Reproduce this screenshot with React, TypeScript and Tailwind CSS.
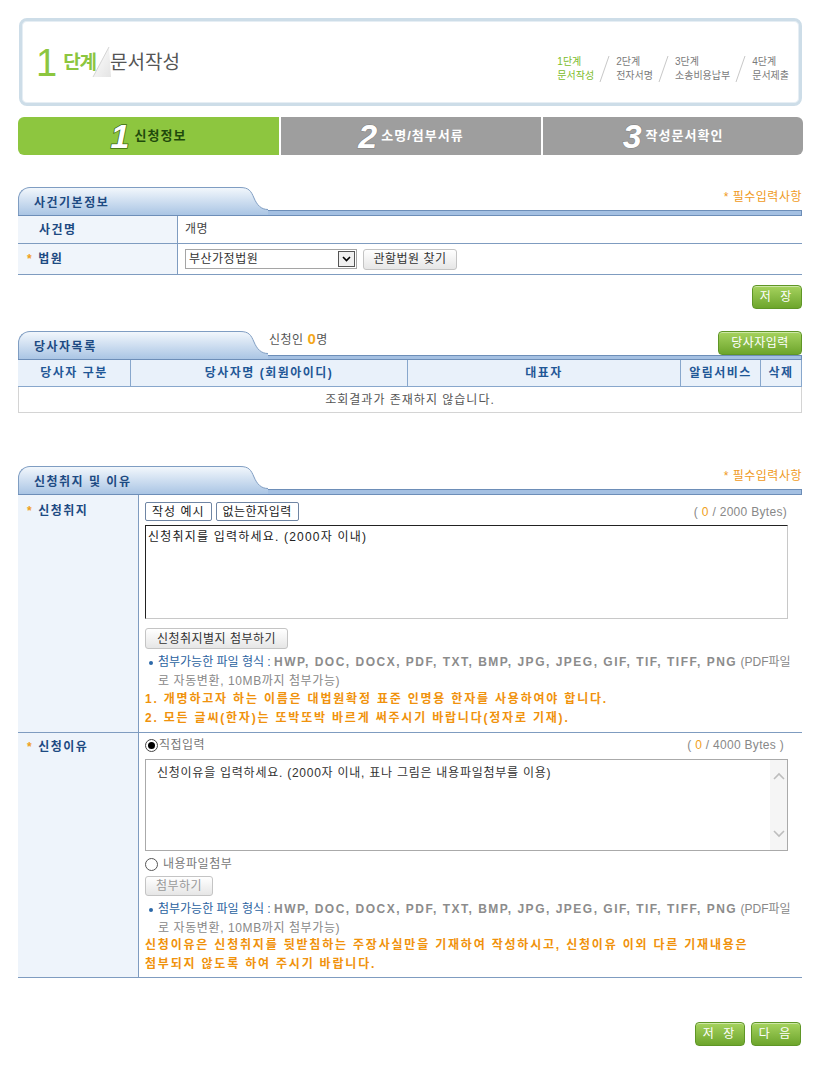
import React from 'react';

function SectionHead({ id, title, children }: { id: string; title: string; children?: React.ReactNode }) {
  return (
    <div className="flex h-[29px] items-stretch border-b border-[#6d8eb8]">
      <div className="w-[222px] shrink-0 rounded-tl-[12px] border-l border-t border-[#7f9dc2] bg-gradient-to-b from-[#f2f7fc] to-[#aac5e4] pl-[15px] pt-[6px] text-[12px] font-bold tracking-[1.5px] text-[#1d4a82]">
        {title}
      </div>
      <svg width="28" height="28" viewBox="0 0 28 28" className="shrink-0">
        <defs>
          <linearGradient id={id} x1="0" y1="0" x2="0" y2="1">
            <stop offset="0" stopColor="#f2f7fc" />
            <stop offset="1" stopColor="#aac5e4" />
          </linearGradient>
        </defs>
        <path d="M0,0.5 C9,0.5 11,4 14,11 C17,18 21,22.5 28,22.5 L28,28 L0,28 Z" fill={`url(#${id})`} />
        <path d="M0,0.5 C9,0.5 11,4 14,11 C17,18 21,22.5 28,22.5" fill="none" stroke="#7f9dc2" />
      </svg>
      <div className="flex flex-1 flex-col">
        <div className="flex flex-1 items-center">{children}</div>
        <div className="h-[5px] border-r border-t border-[#6d8eb8] bg-[#a4c0e2]" />
      </div>
    </div>
  );
}

function GreenBtn({ children, className }: { children: React.ReactNode; className: string }) {
  return (
    <button className={`h-[24px] rounded-[4px] border border-[#5f9626] bg-gradient-to-b from-[#a6d35e] to-[#6da52b] text-[12px] text-white shadow-[inset_0_1px_0_rgba(255,255,255,0.45)] ${className}`}>
      {children}
    </button>
  );
}

function GrayBtn({ children, className }: { children: React.ReactNode; className: string }) {
  return (
    <button className={`rounded-[3px] border border-[#c4c4c4] bg-gradient-to-b from-[#ffffff] to-[#e6e6e6] text-[12px] tracking-[0.5px] ${className}`}>
      {children}
    </button>
  );
}

function Star() {
  return <span className="mr-[5px] text-[12px] font-bold text-[#f0a020]">*</span>;
}

function FileInfo() {
  return (
    <div className="mt-[4px] pl-[13px] text-[12px] leading-[19px] text-[#777]">
      <div className="relative whitespace-nowrap">
        <span className="absolute left-[-9px] top-[8px] h-[4px] w-[4px] rounded-full bg-[#2c68a8]" />
        <span className="text-[#2a62a0]">첨부가능한 파일 형식 : </span>
        <span className="font-bold tracking-[1.5px] text-[#8c8c8c]">HWP, DOC, DOCX, PDF, TXT, BMP, JPG, JPEG, GIF, TIF, TIFF, PNG</span>
        <span className="text-[#888]"> (PDF파일</span>
      </div>
      <div className="tracking-[0.6px] text-[#888]">로 자동변환, 10MB까지 첨부가능)</div>
    </div>
  );
}

function Steps() {
  const items = [
    ['1단계', '문서작성'],
    ['2단계', '전자서명'],
    ['3단계', '소송비용납부'],
    ['4단계', '문서제출'],
  ];
  return (
    <div className="flex items-end">
      {items.map(([a, b], i) => (
        <div key={a} className="flex items-end">
          {i > 0 && (
            <svg width="22" height="28" viewBox="0 0 22 28">
              <line x1="15" y1="1" x2="6" y2="27" stroke="#c8c8c8" strokeWidth="1" />
            </svg>
          )}
          <div className={`text-[10px] leading-[14px] ${i === 0 ? 'text-[#7cbc2b]' : 'text-[#7a7a7a]'}`}>
            <div>{a}</div>
            <div>{b}</div>
          </div>
        </div>
      ))}
    </div>
  );
}

export default function App() {
  return (
    <div className="min-h-[1066px] w-[816px] bg-white pb-[20px] font-['Liberation_Sans','Noto_Sans_CJK_KR',sans-serif] text-[12px] text-[#333]">
      <div className="ml-[18px] w-[785px] pt-[18px]">
        {/* stage header */}
        <div className="mx-[1px] flex h-[88px] items-center justify-between rounded-[8px] border-[3px] border-[#cddde8] bg-white pl-[14px] pr-[10px] shadow-[inset_0_0_0_1px_#e6eef4]">
          <div className="flex items-center pt-[2px]">
            <span className="text-[38px] leading-none text-[#8cc63f]">1</span>
            <span className="relative ml-[6px] text-[19px] font-bold tracking-[-1px] text-[#8cc63f]">
              단계
              <svg width="34" height="34" viewBox="0 0 34 34" className="absolute left-[24px] top-[-6px]">
                <defs>
                  <linearGradient id="sl" x1="0" y1="0" x2="1" y2="1">
                    <stop offset="0" stopColor="#ffffff" />
                    <stop offset="1" stopColor="#e4e4e4" />
                  </linearGradient>
                </defs>
                <polygon points="22,4 6,34 24,34" fill="url(#sl)" />
                <line x1="22" y1="4" x2="6" y2="34" stroke="#d4d4d4" />
              </svg>
            </span>
            <span className="ml-[14px] text-[19px] text-[#555]">문서작성</span>
          </div>
          <div className="pt-[14px]">
            <Steps />
          </div>
        </div>

        {/* tabs */}
        <div className="mt-[11px] flex h-[38px] gap-[2px]">
          <div className="flex w-[261px] items-center justify-center rounded-l-[6px] bg-[#8dc63f]">
            <span className="mr-[5px] text-[34px] font-bold italic leading-none text-white [-webkit-text-stroke:1.5px_#3e6c12] [paint-order:stroke_fill]">1</span>
            <span className="text-[13px] font-bold tracking-[1px] text-[#1f4a0c]">신청정보</span>
          </div>
          <div className="flex w-[260px] items-center justify-center bg-[#9e9e9e]">
            <span className="mr-[4px] text-[34px] font-bold italic leading-none text-white [-webkit-text-stroke:1px_#808080] [paint-order:stroke_fill]">2</span>
            <span className="text-[13px] font-bold tracking-[1px] text-white">소명/첨부서류</span>
          </div>
          <div className="flex flex-1 items-center justify-center rounded-r-[6px] bg-[#9e9e9e]">
            <span className="mr-[4px] text-[34px] font-bold italic leading-none text-white [-webkit-text-stroke:1px_#808080] [paint-order:stroke_fill]">3</span>
            <span className="text-[13px] font-bold tracking-[1px] text-white">작성문서확인</span>
          </div>
        </div>

        {/* section 1 */}
        <div className="mt-[32px] w-[784px]">
          <SectionHead id="gA" title="사건기본정보">
            <span className="ml-auto mb-[3px] text-[12px] tracking-[0.5px] text-[#ef9a22]">* 필수입력사항</span>
          </SectionHead>
          <div className="flex h-[28px] border-b border-[#7f9cc0]">
            <div className="flex w-[160px] shrink-0 items-center border-r border-[#7f9cc0] bg-[#f0f5fb] pl-[21px] text-[12px] font-bold tracking-[1.5px] text-[#1d4a82]">사건명</div>
            <div className="flex flex-1 items-start pl-[7px] pt-[4px] text-[12px] tracking-[0.5px] text-[#444]">개명</div>
          </div>
          <div className="flex h-[31px] border-b border-[#7f9cc0]">
            <div className="flex w-[160px] shrink-0 items-center border-r border-[#7f9cc0] bg-[#f0f5fb] pl-[9px] text-[12px] font-bold tracking-[1.5px] text-[#1d4a82]">
              <Star />법원
            </div>
            <div className="flex flex-1 items-center gap-[6px] pl-[7px]">
              <div className="flex h-[20px] w-[172px] items-center border border-[#a5a5a5] bg-white">
                <span className="flex-1 pl-[3px] text-[12px] leading-none tracking-[0.5px] text-[#333]">부산가정법원</span>
                <span className="mr-[1px] flex h-[16px] w-[17px] items-center justify-center border border-[#555] bg-[#f0f0f0]">
                  <svg width="9" height="6" viewBox="0 0 9 6">
                    <path d="M1,1 L4.5,4.5 L8,1" fill="none" stroke="#000" strokeWidth="1.6" />
                  </svg>
                </span>
              </div>
              <GrayBtn className="h-[21px] w-[94px] text-[#333]">관할법원 찾기</GrayBtn>
            </div>
          </div>
          <div className="mt-[10px] flex justify-end">
            <GreenBtn className="w-[50px] tracking-[3px]">저 장</GreenBtn>
          </div>
        </div>

        {/* section 2 */}
        <div className="mt-[22px] w-[784px]">
          <SectionHead id="gB" title="당사자목록">
            <div className="flex w-full items-start self-stretch">
              <span className="ml-[1px] mt-[-3px] text-[12px] tracking-[0.5px] text-[#555]">
                신청인 <span className="text-[15px] font-bold text-[#f4a81a]">0</span>명
              </span>
              <GreenBtn className="ml-auto mt-[0px] h-[21px] w-[84px] tracking-[0.5px]">당사자입력</GreenBtn>
            </div>
          </SectionHead>
          <div className="flex h-[27px] border-b border-[#88a7cc] bg-[#e9f1fa] text-[12px] font-bold tracking-[1.5px] text-[#1f5796]">
            <div className="flex w-[113px] items-center justify-center border-r border-[#88a7cc]">당사자 구분</div>
            <div className="flex w-[277px] items-center justify-center border-r border-[#88a7cc]">당사자명 (회원아이디)</div>
            <div className="flex w-[273px] items-center justify-center border-r border-[#88a7cc]">대표자</div>
            <div className="flex w-[80px] items-center justify-center border-r border-[#88a7cc]">알림서비스</div>
            <div className="flex flex-1 items-center justify-center border-r border-[#88a7cc]">삭제</div>
          </div>
          <div className="flex h-[26px] items-center justify-center border-x border-b border-[#d4d4d4] text-[12px] tracking-[1px] text-[#555]">
            조회결과가 존재하지 않습니다.
          </div>
        </div>

        {/* section 3 */}
        <div className="mt-[53px] w-[784px]">
          <SectionHead id="gC" title="신청취지 및 이유">
            <span className="ml-auto mb-[3px] text-[12px] tracking-[0.5px] text-[#ef9a22]">* 필수입력사항</span>
          </SectionHead>

          <div className="flex border-b border-[#7f9cc0]">
            <div className="w-[121px] shrink-0 border-r border-[#7f9cc0] bg-[#eef4fb] pl-[9px] pt-[7px] text-[12px] font-bold tracking-[1.5px] text-[#1d4a82]">
              <Star />신청취지
            </div>
            <div className="min-w-0 flex-1 pb-[4px] pl-[6px] pr-[15px] pt-[7px]">
              <div className="flex items-center">
                <button className="h-[19px] rounded-[2px] border border-[#6f85a3] bg-white px-[6px] text-[12px] tracking-[1px] text-[#222]">작성 예시</button>
                <button className="ml-[4px] h-[19px] rounded-[2px] border border-[#6f85a3] bg-white px-[6px] text-[12px] tracking-[0.5px] text-[#222]">없는한자입력</button>
                <span className="ml-auto text-[12px] tracking-[0.3px] text-[#888]">
                  ( <span className="text-[#f0a020]">0</span> / 2000 Bytes)
                </span>
              </div>
              <div className="mt-[4px] h-[94px] w-[643px] border border-[#c8c8c8] border-l-[#222] border-t-[#222] px-[2px] pt-[2px] text-[12px] tracking-[1.2px] text-[#222]">
                신청취지를 입력하세요. (2000자 이내)
              </div>
              <GrayBtn className="mt-[9px] h-[21px] w-[143px] text-[#333]">신청취지별지 첨부하기</GrayBtn>
              <FileInfo />
              <div className="mt-[-1px] whitespace-nowrap text-[12px] font-bold leading-[19px] tracking-[1.8px] text-[#f0920c]">
                <div>1. 개명하고자 하는 이름은 대법원확정 표준 인명용 한자를 사용하여야 합니다.</div>
                <div>2. 모든 글씨(한자)는 또박또박 바르게 써주시기 바랍니다(정자로 기재).</div>
              </div>
            </div>
          </div>

          <div className="flex border-b border-[#7f9cc0]">
            <div className="w-[121px] shrink-0 border-r border-[#7f9cc0] bg-[#eef4fb] pl-[9px] pt-[5px] text-[12px] font-bold tracking-[1.5px] text-[#1d4a82]">
              <Star />신청이유
            </div>
            <div className="min-w-0 flex-1 pb-[3px] pl-[6px] pr-[15px] pt-[3px]">
              <div className="flex items-center">
                <span className="flex h-[13px] w-[13px] items-center justify-center rounded-full border border-[#444] bg-white">
                  <span className="h-[7px] w-[7px] rounded-full bg-black" />
                </span>
                <span className="ml-[1px] text-[12px] tracking-[0.5px] text-[#777]">직접입력</span>
                <span className="ml-auto pr-[3px] text-[12px] tracking-[0.3px] text-[#888]">
                  ( <span className="text-[#f0a020]">0</span> / 4000 Bytes )
                </span>
              </div>
              <div className="mt-[5px] flex h-[92px] w-[643px] border border-[#aaa]">
                <div className="flex-1 pl-[11px] pt-[4px] text-[12px] tracking-[0.75px] text-[#333]">
                  신청이유을 입력하세요. (2000자 이내, 표나 그림은 내용파일첨부를 이용)
                </div>
                <div className="flex w-[17px] flex-col items-center justify-between bg-[#f5f5f5] py-[12px]">
                  <svg width="12" height="8" viewBox="0 0 12 8">
                    <path d="M1,7 L6,2 L11,7" fill="none" stroke="#bdbdbd" strokeWidth="1.6" />
                  </svg>
                  <svg width="12" height="8" viewBox="0 0 12 8">
                    <path d="M1,1 L6,6 L11,1" fill="none" stroke="#bdbdbd" strokeWidth="1.6" />
                  </svg>
                </div>
              </div>
              <div className="mt-[4px] flex items-center">
                <span className="h-[13px] w-[13px] rounded-full border border-[#555] bg-white" />
                <span className="ml-[5px] text-[12px] tracking-[0.5px] text-[#777]">내용파일첨부</span>
              </div>
              <GrayBtn className="mt-[3px] h-[20px] w-[68px] text-[#999]">첨부하기</GrayBtn>
              <FileInfo />
              <div className="mt-[-2px] whitespace-nowrap text-[12px] font-bold leading-[19px] tracking-[1.8px] text-[#f0920c]">
                <div>신청이유은 신청취지를 뒷받침하는 주장사실만을 기재하여 작성하시고, 신청이유 이외 다른 기재내용은</div>
                <div>첨부되지 않도록 하여 주시기 바랍니다.</div>
              </div>
            </div>
          </div>

          <div className="mt-[44px] flex justify-end gap-[6px] pr-[1px]">
            <GreenBtn className="w-[50px] tracking-[3px]">저 장</GreenBtn>
            <GreenBtn className="w-[50px] tracking-[3px]">다 음</GreenBtn>
          </div>
        </div>
      </div>
    </div>
  );
}
